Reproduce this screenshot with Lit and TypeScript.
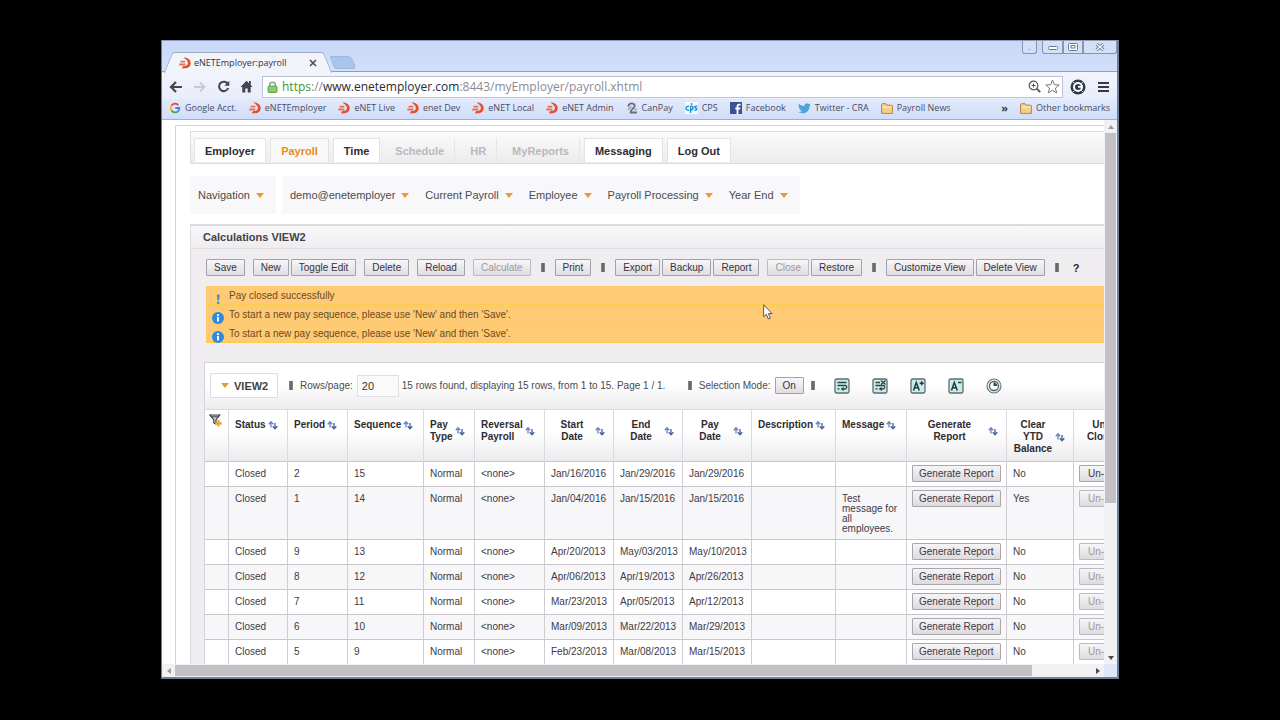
import { LitElement, html, svg, css, nothing } from "lit";
import { customElement, property } from "lit/decorators.js";
import { classMap } from "lit/directives/class-map.js";

type IconName =
  | "google" | "enet" | "canpay" | "cps" | "facebook" | "twitter" | "folder"
  | "back" | "forward" | "reload" | "home" | "lock" | "zoom" | "star" | "badge" | "menu"
  | "close" | "sort" | "filter" | "wrap" | "unwrap" | "fontUp" | "fontDown" | "clock"
  | "info" | "alert" | "winMin" | "winMax" | "winClose" | "cursor";

const box = svg`<rect x="1" y="1" width="14" height="14" rx="1.5" fill="#c9ece9" stroke="#5c6c72" stroke-width="1.3"/>`;

const ICONS: Record<IconName, { w: number; h: number; body: unknown }> = {
  google: { w: 12, h: 12, body: svg`<g fill="none" stroke-width="1.8"><path d="M9.4 3.2A4.300 4.300 0 0 0 2.500 3.600" stroke="#ea4335"/><path d="M2.500 3.600a4.300 4.300 0 0 0 0 4.800" stroke="#fbbc05"/><path d="M2.500 8.400a4.300 4.300 0 0 0 6.500.900" stroke="#34a853"/><path d="M6.300 6H10.300A4.300 4.300 0 0 1 9 9.300" stroke="#4285f4"/></g>` },
  enet: { w: 12, h: 12, body: svg`<path d="M4.500.6C9 .4 11.700 3 11.700 6.200 11.700 9.400 9 11.400 5.600 11.300L2.800 11.600 4.200 8.900C7 9.400 8.900 8.300 8.900 6 8.900 3.900 7.400 2.600 4.500.6Z" fill="#e2502c"/><path d="M1.500 4.600H6.300M.3 7.500H6.300" stroke="#ee7048" stroke-width="1.800"/>` },
  canpay: { w: 12, h: 12, body: svg`<path d="M2 4.500C3 2 5 1 6.500 1.500 9.500 2 9 4.500 7.500 6 6 7.500 4.500 8 4.500 10.500H11" fill="none" stroke="#6d6d74" stroke-width="1.800"/><path d="M2 7.500L5.500 4.500M8.500 8L11 7" stroke="#96969c" stroke-width="1.300"/>` },
  cps: { w: 13, h: 12, body: svg`<rect width="13" height="12" fill="#f8fcff"/><g fill="none" stroke="#1e93d6" stroke-width="1.500"><path d="M4 4.500a2 2 0 1 0 0 3.500M5.600 4V11M5.600 4.500c3-1 3.400 3.800 0 3.400M12.300 4.300c-3-.7-3.200 1.300-1.600 1.600s2 2.500-1.200 2.200"/></g><circle cx="6.500" cy="2" r="1" fill="#1e93d6"/>` },
  facebook: { w: 12, h: 12, body: svg`<rect width="12" height="12" fill="#3b5190"/><path d="M7.500 12V4.300Q7.500 2.600 9 2.600H10.700M5.300 6.500H10.300" fill="none" stroke="#fff" stroke-width="1.800"/>` },
  twitter: { w: 13, h: 12, body: svg`<path d="M.8 1.600C2.600 3.500 4.400 4.300 6.400 4.300 6.300 1.500 8.800.6 10.300 2L12.300 1.500 11.700 3 12.700 3.100 11.600 4.200C11.400 8.800 8 11.200 4.600 11.200 3 11.200 1.500 10.800.4 10 2 10 3.200 9.600 4 9 2.600 8.800 1.900 8 1.600 7.200H2.700C1.300 6.600.7 5.800.6 4.400L1.600 4.700C.5 3.900.2 2.700.8 1.600Z" fill="#4ba3e0"/>` },
  folder: { w: 12, h: 11, body: svg`<path d="M.6 10.400V1.600Q.6.700 1.500.7H5L6 2.200H10.500Q11.400 2.200 11.400 3V10.400Z" fill="#f6cf86" stroke="#b58342"/><path d="M1.200 4H10.800" stroke="#fff0c8"/>` },
  back: { w: 14, h: 12, body: svg`<path d="M13 6H2.500M7 1L2 6L7 11" fill="none" stroke="#47454c" stroke-width="2.200"/>` },
  forward: { w: 14, h: 12, body: svg`<path d="M1 6H11.500M7 1.500L11.500 6L7 10.500" fill="none" stroke="#c9cad2" stroke-width="1.900"/>` },
  reload: { w: 13, h: 13, body: svg`<path d="M10.800 4A4.700 4.700 0 1 0 11.200 8" fill="none" stroke="#47454c" stroke-width="2.100"/><path d="M12.300.8V5.800H7.300Z" fill="#47454c"/>` },
  home: { w: 13, h: 13, body: svg`<path d="M6.500.8L.5 7H2.300V12.500H5.300V8.500H7.700V12.500H10.700V7H12.500L10.800 5.200V1H9V3.300Z" fill="#47454c"/>` },
  lock: { w: 11, h: 12, body: svg`<path d="M2.700 6V3.600Q2.700 1.200 5.500 1.200T8.300 3.600V6" fill="none" stroke="#8fa88c" stroke-width="1.600"/><rect x="1" y="5" width="9" height="6.500" rx="1" fill="#7cc45a" stroke="#58a044" stroke-width=".8"/><path d="M2 7H9M2 9H9" stroke="#a8dc8c" stroke-width=".8"/>` },
  zoom: { w: 13, h: 13, body: svg`<circle cx="5.500" cy="5.500" r="4.300" fill="none" stroke="#55545a" stroke-width="1.200"/><path d="M3.500 5.500H7.500M5.500 3.500V7.500" stroke="#55545a"/><path d="M8.700 8.700L12.200 12.200" stroke="#55545a" stroke-width="1.900"/>` },
  star: { w: 15, h: 15, body: svg`<path d="M7.500 1L9.300 5.700 14.200 6 10.400 9.100 11.700 13.900 7.500 11.200 3.300 13.900 4.600 9.100.8 6 5.700 5.700Z" fill="#fff" stroke="#6a6a72" stroke-width=".9"/>` },
  badge: { w: 16, h: 16, body: svg`<circle cx="8" cy="8" r="7.500" fill="#323846"/><circle cx="8" cy="8" r="4" fill="none" stroke="#fff" stroke-width="2"/><path d="M8 7.800H12.200" stroke="#fff" stroke-width="1.800"/><path d="M3 3L4.500 4.500M13 3L11.500 4.500M3 13L4.500 11.500M13 13L11.500 11.500" stroke="#d4d8e4"/>` },
  menu: { w: 11, h: 12, body: svg`<path d="M0 2H11M0 6H11M0 10H11" stroke="#3a3844" stroke-width="2"/>` },
  close: { w: 8, h: 8, body: svg`<path d="M1 1L7 7M7 1L1 7" stroke="#4a4a50" stroke-width="1.500"/>` },
  sort: { w: 10, h: 10, body: svg`<path d="M3 7.500V2M.8 4.200L3 1.700 5.200 4.200" fill="none" stroke="#6a82bc" stroke-width="1.300"/><path d="M7 3V8.500M4.800 6.300L7 8.700 9.300 6.300" fill="none" stroke="#46609f" stroke-width="1.300"/>` },
  filter: { w: 13, h: 13, body: svg`<path d="M.8 1H10.800L7 5.600V10L4.800 8.800V5.600Z" fill="#d8d8dc" stroke="#3a3a3e" stroke-width="1.100"/><path d="M2 2.800H9.600" stroke="#3a3a3e"/><path d="M9.500 6V12.600M6.200 9.300H12.800" stroke="#f0a22c" stroke-width="2.200"/>` },
  wrap: { w: 16, h: 16, body: svg`${box}<path d="M3.500 4.500H12.500M3.500 7.500H11.500Q13 7.800 12.700 9.500T10.500 11H8M3.500 10.800H5.500" fill="none" stroke="#2c4248" stroke-width="1.300"/><path d="M9.600 8.800V13L6.700 10.900Z" fill="#2c4248"/>` },
  unwrap: { w: 16, h: 16, body: svg`${box}<path d="M3.500 4.500H8M3.500 7.500H11.500Q13 7.800 12.700 9.500T10.500 11H8M3.500 10.800H5.500" fill="none" stroke="#2c4248" stroke-width="1.300"/><path d="M9.600 8.800V13L6.700 10.900Z" fill="#2c4248"/><path d="M9 2.500L13.500 6.500M13.500 2.500L9 6.500" stroke="#2c4248" stroke-width="1.300"/>` },
  fontUp: { w: 16, h: 16, body: svg`${box}<path d="M3.500 12.500L6.300 4.500 9.300 12.500M4.500 9.800H8.300M9.700 5.200H13.700M11.700 3.200V7.200" fill="none" stroke="#24383e" stroke-width="1.500"/>` },
  fontDown: { w: 16, h: 16, body: svg`${box}<path d="M3.500 12.500L6.300 4.500 9.300 12.500M4.500 9.800H8.300M10 4.500H13.500" fill="none" stroke="#24383e" stroke-width="1.500"/>` },
  clock: { w: 16, h: 16, body: svg`<circle cx="8" cy="8" r="7" fill="#e6f2f1" stroke="#66747c" stroke-width="1.100"/><circle cx="8" cy="8" r="4.500" fill="#fff" stroke="#50606a" stroke-width="1.300"/><path d="M7.500 8V4.500A4 4 0 0 1 11.300 8Z" fill="#34464e"/>` },
  info: { w: 12, h: 12, body: svg`<circle cx="6" cy="6" r="6" fill="#2e8ae0"/><circle cx="6" cy="3.200" r="1.100" fill="#fff"/><path d="M6 5V9.600" stroke="#fff" stroke-width="1.900"/>` },
  alert: { w: 12, h: 12, body: svg`<path d="M4.800 1.500H7.700L7 7.400H5.500Z" fill="#4a8cc4"/><circle cx="6.200" cy="9.700" r="1.300" fill="#4a8cc4"/>` },
  winMin: { w: 10, h: 8, body: svg`<rect x=".5" y="3.500" width="9" height="3" rx="1" fill="#fff" stroke="#6a7690"/>` },
  winMax: { w: 10, h: 8, body: svg`<rect x=".5" y=".5" width="9" height="7" rx="1" fill="#fff" stroke="#6a7690"/><rect x="3" y="2.500" width="4" height="2.500" fill="none" stroke="#6a7690"/>` },
  winClose: { w: 10, h: 8, body: svg`<path d="M1.500 1L8.500 7M8.500 1L1.500 7" stroke="#6a7690" stroke-width="3"/><path d="M1.500 1L8.500 7M8.500 1L1.500 7" stroke="#fff" stroke-width="1.200"/>` },
  cursor: { w: 10, h: 16, body: svg`<path d="M.7.800V12.800L3.400 10.300 5.400 15 7.400 14.100 5.400 9.600H9Z" fill="#fff" stroke="#4a4450" stroke-width=".9"/>` },
};

const icon = (name: IconName) => {
  const i = ICONS[name];
  return html`<svg class="icon" width=${i.w} height=${i.h} viewBox="0 0 ${i.w} ${i.h}" aria-hidden="true">${i.body}</svg>`;
};

const shared = css`
  * { box-sizing: border-box; }
  button { font: inherit; color: inherit; margin: 0; padding: 0; border: 0; background: none; white-space: nowrap; }
  a { color: inherit; text-decoration: none; }
  .icon { display: block; flex: none; }
`;

const BOOKMARKS: [IconName, string][] = [
  ["google", "Google Acct."], ["enet", "eNETEmployer"], ["enet", "eNET Live"], ["enet", "enet Dev"],
  ["enet", "eNET Local"], ["enet", "eNET Admin"], ["canpay", "CanPay"], ["cps", "CPS"],
  ["facebook", "Facebook"], ["twitter", "Twitter - CRA"], ["folder", "Payroll News"],
];

@customElement("browser-chrome")
export class BrowserChrome extends LitElement {
  static styles = [shared, css`
    :host { display: block; font: 9px/12px "Open Sans", "Noto Sans", sans-serif; color: #3c3c46; }
    .strip { display: flex; height: 31px; background: linear-gradient(#c8d8f8, #d2dffa); border-top: 1px solid #8d9ab2; isolation: isolate; }
    .tab { display: flex; align-items: center; align-self: flex-end; width: 148px; height: 20px; margin: 0 0 -1px 12px; padding: 0 5px; background: #f2f4fc; border-top: 1px solid #9aa6c0; position: relative; }
    .tab::before, .tab::after { content: ""; position: absolute; top: -1px; width: 12px; height: 20px; background: #f2f4fc; z-index: -1; }
    .tab::before { left: -6px; transform: skewX(-22deg); border-left: 1px solid #9aa6c0; border-top: 1px solid #9aa6c0; border-top-left-radius: 3px; }
    .tab::after { right: -6px; transform: skewX(22deg); border-right: 1px solid #9aa6c0; border-top: 1px solid #9aa6c0; border-top-right-radius: 3px; }
    .title { flex: 1; margin-left: 3px; color: #33323a; }
    .newtab { width: 22px; height: 13px; margin: 15px 0 0 10px; background: #a9c5ee; border: 1px solid #9db8e0; border-radius: 2px 4px 4px 2px; transform: skewX(22deg); }
    .controls { display: flex; margin-left: auto; align-self: flex-start; color: #6a7690; }
    .controls button { display: grid; place-items: center; height: 13px; border: 1px solid #8894b0; border-top: 0; background: #d4e0f8; }
    .help { width: 15px; margin-right: 5px; border-radius: 0 0 3px 3px; }
    .min { width: 21px; border-radius: 0 0 0 3px; }
    .max { width: 20px; }
    .x { width: 34px; border-radius: 0 0 3px 0; }
    .bar { display: flex; align-items: center; height: 28px; padding: 2px 6px 0 7px; gap: 10px; background: linear-gradient(#f2f4fc, #e8edfb); border-top: 1px solid #8f9ebc; }
    .address { flex: 1; display: flex; align-items: center; height: 22px; padding: 0 2px 0 4px; margin-left: -1px; background: #fff; border: 1px solid #bcc4d6; gap: 4px; }
    .url { flex: 1; font-size: 12px; line-height: 16px; color: #8c8b94; outline: none; white-space: nowrap; overflow: hidden; }
    .secure { color: #3c9a2c; }
    .domain { color: #2c2a34; }
    .tail { display: flex; align-items: center; gap: 12px; margin: 0 2px 0 -3px; }
    .marks { display: flex; align-items: center; height: 21px; padding: 0 7px 2px; gap: 12px; background: linear-gradient(#e2eafb, #d0dcf9); border-bottom: 1px solid #a4aec8; }
    .mark { display: flex; align-items: center; gap: 4px; white-space: nowrap; color: #4a4d60; }
    .more { margin-left: auto; font-weight: 700; font-size: 11px; }
  `];

  render() {
    return html`
      <div class="strip">
        <div class="tab">${icon("enet")}<span class="title">eNETEmployer:payroll</span><button aria-label="Close tab">${icon("close")}</button></div>
        <button class="newtab" aria-label="New tab"></button>
        <div class="controls">
          <button class="help" aria-label="Help">.</button>
          <button class="min" aria-label="Minimize">${icon("winMin")}</button>
          <button class="max" aria-label="Maximize">${icon("winMax")}</button>
          <button class="x" aria-label="Close">${icon("winClose")}</button>
        </div>
      </div>
      <div class="bar">
        <button aria-label="Back">${icon("back")}</button>
        <button aria-label="Forward">${icon("forward")}</button>
        <button aria-label="Reload">${icon("reload")}</button>
        <button aria-label="Home">${icon("home")}</button>
        <div class="address">
          ${icon("lock")}
          <div class="url" role="textbox" aria-label="Address" contenteditable="true" spellcheck="false"><span class="secure">https</span>://<span class="domain">www.enetemployer.com</span>:8443/myEmployer/payroll.xhtml</div>
          <button aria-label="Zoom">${icon("zoom")}</button>
          <button aria-label="Bookmark">${icon("star")}</button>
        </div>
        <div class="tail">
          <button aria-label="Extension">${icon("badge")}</button>
          <button aria-label="Menu">${icon("menu")}</button>
        </div>
      </div>
      <nav class="marks" aria-label="Bookmarks">
        ${BOOKMARKS.map(([i, t]) => html`<a class="mark" href="#">${icon(i)}${t}</a>`)}
        <button class="more">»</button>
        <a class="mark" href="#">${icon("folder")}Other bookmarks</a>
      </nav>
    `;
  }
}

interface PayRow {
  period: string; seq: string; start: string; end: string; pay: string;
  message?: string; clear: string; open?: boolean;
}

const ROWS: PayRow[] = [
  { period: "2", seq: "15", start: "Jan/16/2016", end: "Jan/29/2016", pay: "Jan/29/2016", clear: "No", open: true },
  { period: "1", seq: "14", start: "Jan/04/2016", end: "Jan/15/2016", pay: "Jan/15/2016", message: "Test message for all employees.", clear: "Yes" },
  { period: "9", seq: "13", start: "Apr/20/2013", end: "May/03/2013", pay: "May/10/2013", clear: "No" },
  { period: "8", seq: "12", start: "Apr/06/2013", end: "Apr/19/2013", pay: "Apr/26/2013", clear: "No" },
  { period: "7", seq: "11", start: "Mar/23/2013", end: "Apr/05/2013", pay: "Apr/12/2013", clear: "No" },
  { period: "6", seq: "10", start: "Mar/09/2013", end: "Mar/22/2013", pay: "Mar/29/2013", clear: "No" },
  { period: "5", seq: "9", start: "Feb/23/2013", end: "Mar/08/2013", pay: "Mar/15/2013", clear: "No" },
];

/* label lines, column width, centred label */
const COLUMNS: [string[], number, boolean][] = [
  [["Status"], 59, false], [["Period"], 60, false], [["Sequence"], 76, false],
  [["Pay", "Type"], 51, false], [["Reversal", "Payroll"], 70, false],
  [["Start", "Date"], 69, true], [["End", "Date"], 69, true], [["Pay", "Date"], 69, true],
  [["Description"], 84, false], [["Message"], 71, false], [["Generate", "Report"], 100, true],
  [["Clear", "YTD", "Balance"], 67, true], [["Un-", "Close"], 68, true],
];

@customElement("payroll-table")
export class PayrollTable extends LitElement {
  @property({ attribute: false }) rows: PayRow[] = ROWS;

  static styles = [shared, css`
    :host { display: block; width: max-content; min-width: 100%; }
    table { table-layout: fixed; width: 937px; border-collapse: separate; border-spacing: 0; font-size: 10px; line-height: 10px; color: #3e3a44; }
    .c-filter { width: 24px; }
    th, td { padding: 7px 5px 0 6px; text-align: left; vertical-align: top; border-right: 1px solid #cfccd2; border-bottom: 1px solid #c8c5cb; }
    th { height: 52px; padding: 9px 8px 0 6px; line-height: 12px; color: #2e2c32; background: linear-gradient(#fff 40%, #ecebee); border-right-color: #dcdadf; }
    th.corner { padding: 4px 0 0 4px; }
    .head { display: flex; align-items: center; gap: 2px; }
    .mid .label { flex: 1; text-align: center; }
    .line { display: block; }
    tr { height: 25px; }
    tr.tall { height: 53px; }
    tr:nth-child(even) td { background: #f7f6f9; }
    td.act { padding: 3px 5px 0 5px; }
    .btn { height: 17px; padding: 0 6px; border: 1px solid #a9a7ac; border-radius: 1px; background: linear-gradient(#f6f5f7, #dddbdf); line-height: 15px; }
    .btn.undo { padding: 0 8px; }
    .btn:disabled { color: #9c9aa0; border-color: #bdbbc0; }
  `];

  render() {
    return html`
      <table>
        <colgroup>
          <col class="c-filter" />
          ${COLUMNS.map(([, w]) => html`<col style="width:${w}px" />`)}
        </colgroup>
        <thead>
          <tr>
            <th class="corner"><button aria-label="Filter">${icon("filter")}</button></th>
            ${COLUMNS.map(([lines, , mid]) => html`<th><div class=${classMap({ head: true, mid })}><span class="label">${lines.map((l) => html`<span class="line">${l}</span>`)}</span><button aria-label="Sort">${icon("sort")}</button></div></th>`)}
          </tr>
        </thead>
        <tbody>
          ${this.rows.map((r) => html`<tr class=${classMap({ tall: !!r.message })}>
            <td></td><td>Closed</td><td>${r.period}</td><td>${r.seq}</td><td>Normal</td><td>&lt;none&gt;</td>
            <td>${r.start}</td><td>${r.end}</td><td>${r.pay}</td><td></td><td>${r.message ?? nothing}</td>
            <td class="act"><button class="btn">Generate Report</button></td>
            <td>${r.clear}</td>
            <td class="act"><button class="btn undo" ?disabled=${!r.open}>Un-Close</button></td>
          </tr>`)}
        </tbody>
      </table>
    `;
  }
}

const MODULES: [string, string][] = [
  ["Employer", "on"], ["Payroll", "current"], ["Time", "on"], ["Schedule", "off"],
  ["HR", "off"], ["MyReports", "off"], ["Messaging", "on"], ["Log Out", "on"],
];

/* "|" draws a divider; "~" marks an unavailable action */
const ACTIONS: string[][] = [
  ["Save"], ["New", "Toggle Edit"], ["Delete"], ["Reload"], ["~Calculate"], ["|"], ["Print"], ["|"],
  ["Export", "Backup", "Report"], ["~Close", "Restore"], ["|"], ["Customize View", "Delete View"], ["|"],
];

@customElement("payroll-page")
export class PayrollPage extends LitElement {
  static styles = [shared, css`
    :host { display: block; overflow: hidden; background: #fff; font: 11px/14px "Liberation Sans", Arial, sans-serif; color: #4c4a50; }
    .sheet { margin: 5px 0 0 13px; padding: 5px 0 0 14px; border: solid #d4d4da; border-width: 1px 0 0 1px; }
    .modules { display: flex; gap: 4px; height: 33px; padding: 6px 3px 1px; border: 1px solid #dddce0; border-right: 0; background: linear-gradient(#fbfafb, #ecebed); font-weight: 700; }
    .modules button { padding: 0 10px; border: 1px solid #e4e2e6; border-bottom: 0; font-weight: 700; }
    .modules .on { background: #fff; color: #2e2c30; }
    .modules .current { color: #ec8a22; background: #f9f8f9; }
    .modules .off { color: #bab8bd; border-color: transparent #e6e4e8 transparent transparent; }
    .menus { display: flex; gap: 6px; margin-top: 12px; }
    .menu { display: flex; gap: 16px; height: 38px; padding: 0 12px 0 8px; background: #f8f7f9; }
    .menu button { display: flex; align-items: center; gap: 6px; }
    .caret { border: 4px solid transparent; border-top: 5px solid #ec9a34; border-bottom: 0; }
    .panel { margin-top: 10px; background: #efedef; border: 1px solid #dcdadd; border-width: 2px 0 0 1px; }
    h1 { margin: 0; padding: 5px 12px; height: 23px; font-size: 11px; line-height: 12px; color: #444248; background: linear-gradient(#f9f8f9, #eeecef); border-bottom: 1px solid #e0dee2; }
    .actions { display: flex; align-items: center; gap: 8px; height: 37px; padding: 0 15px; font-size: 10px; white-space: nowrap; }
    .group { display: flex; gap: 2px; }
    .btn { height: 17px; padding: 0 7px; border: 1px solid #a4a2a8; border-radius: 1px; background: linear-gradient(#f7f6f8, #dfdde1); color: #37343c; line-height: 15px; font-size: 10px; }
    .btn:disabled { color: #9c9aa0; border-color: #bdbbc0; }
    .rule { width: 4px; height: 9px; background: linear-gradient(90deg, #909090, #5c5c5e 50%, #909090); }
    .actions .rule { margin: 0 2px; }
    .ask { margin-left: 4px; font-size: 11px; font-weight: 700; color: #2c2a2e; }
    .notes { list-style: none; margin: 0 0 19px 15px; padding: 0; font-size: 10px; line-height: 14px; color: #6a4a1e; background: #fecb74; }
    .note { display: flex; gap: 5px; height: 19px; padding: 3px 6px 0; border-bottom: 1px solid #fccd4c; }
    .note .icon { margin-top: 4px; }
    .grid { margin-left: 13px; border: solid #d6d4d8; border-width: 1px 0 0 1px; background: #fff; }
    .tools { display: flex; align-items: center; gap: 7px; height: 47px; padding: 0 0 1px 5px; background: linear-gradient(#fff 45%, #ecebee); border-bottom: 1px solid #dcdadf; font-size: 10px; white-space: nowrap; }
    .view { display: flex; align-items: center; gap: 5px; height: 25px; width: 68px; padding-left: 10px; margin-right: 4px; border: 1px solid #e0dee2; background: #fff; font-size: 11px; font-weight: 700; color: #444; }
    .field { display: flex; align-items: center; gap: 4px; }
    .field input { width: 42px; height: 22px; padding: 0 4px; border: 1px solid #e0dee2; background: #fbfafb; font: 11px/14px "Liberation Sans", Arial, sans-serif; color: #333; }
    .count { width: 279px; margin-left: -4px; }
    .tray { display: flex; gap: 22px; margin-left: 12px; }
  `];

  render() {
    const menu = (t: string) => html`<button>${t}<span class="caret"></span></button>`;
    return html`
      <div class="sheet">
        <nav class="modules">
          ${MODULES.map(([t, c]) => html`<button class=${c} ?disabled=${c === "off"}>${t}</button>`)}
        </nav>
        <div class="menus">
          <div class="menu">${menu("Navigation")}</div>
          <div class="menu">${["demo@enetemployer", "Current Payroll", "Employee", "Payroll Processing", "Year End"].map(menu)}</div>
        </div>
        <section class="panel">
          <h1>Calculations VIEW2</h1>
          <div class="actions">
            ${ACTIONS.map((g) => g[0] === "|"
              ? html`<span class="rule"></span>`
              : html`<span class="group">${g.map((a) => html`<button class="btn" ?disabled=${a.startsWith("~")}>${a.replace("~", "")}</button>`)}</span>`)}
            <button class="ask">?</button>
          </div>
          <ul class="notes">
            <li class="note">${icon("alert")}Pay closed successfully</li>
            <li class="note">${icon("info")}To start a new pay sequence, please use 'New' and then 'Save'.</li>
            <li class="note">${icon("info")}To start a new pay sequence, please use 'New' and then 'Save'.</li>
          </ul>
          <div class="grid">
            <div class="tools">
              <button class="view"><span class="caret"></span>VIEW2</button>
              <span class="rule"></span>
              <span class="field"><label for="rows">Rows/page:</label><input id="rows" type="text" .value=${"20"} /></span>
              <span class="count">15 rows found, displaying 15 rows, from 1 to 15. Page 1 / 1.</span>
              <span class="rule"></span>
              <span class="field">Selection Mode:<button class="btn">On</button></span>
              <span class="rule"></span>
              <span class="tray">
                <button aria-label="Wrap text">${icon("wrap")}</button>
                <button aria-label="Do not wrap">${icon("unwrap")}</button>
                <button aria-label="Larger text">${icon("fontUp")}</button>
                <button aria-label="Smaller text">${icon("fontDown")}</button>
                <button aria-label="Reset">${icon("clock")}</button>
              </span>
            </div>
            <payroll-table></payroll-table>
          </div>
        </section>
      </div>
    `;
  }
}

@customElement("app-root")
export class AppRoot extends LitElement {
  static styles = [shared, css`
    :host { display: block; height: 100vh; box-sizing: border-box; padding: 40px 161px 41px; background: #000; position: relative; overflow: hidden; }
    .window { display: grid; grid-template-rows: auto minmax(0, 1fr); height: 100%; border: solid #6e7f98; border-width: 0 2px 2px 1px; background: #dfe7f8; }
    .view { display: grid; grid-template: minmax(0, 1fr) 13px / minmax(0, 1fr) 13px; }
    .vbar, .hbar { display: flex; background: #f1f0f3; }
    .vbar { flex-direction: column; align-items: stretch; }
    .vthumb { height: 68%; background: #c2c0c4; margin: 0 1px; }
    .hthumb { width: 91%; margin: 1px 0; background: #c2c0c4; }
    .arrow { flex: none; display: grid; place-items: center; width: 13px; height: 13px; }
    .end { margin-left: auto; }
    .bottom { margin-top: auto; }
    .tri { border: 3px solid transparent; }
    .up { border-bottom: 4px solid #9a989e; border-top: 0; }
    .down { border-top: 4px solid #4a484e; border-bottom: 0; }
    .left { border-right: 4px solid #9a989e; border-left: 0; }
    .right { border-left: 4px solid #4a484e; border-right: 0; }
    .pointer { position: absolute; left: 763px; top: 304px; }
  `];

  render() {
    return html`
      <div class="window">
        <browser-chrome></browser-chrome>
        <div class="view">
          <payroll-page></payroll-page>
          <div class="vbar">
            <span class="arrow"><span class="tri up"></span></span>
            <span class="vthumb"></span>
            <span class="arrow bottom"><span class="tri down"></span></span>
          </div>
          <div class="hbar">
            <span class="arrow"><span class="tri left"></span></span>
            <span class="hthumb"></span>
            <span class="arrow end"><span class="tri right"></span></span>
          </div>
        </div>
      </div>
      <div class="pointer">${icon("cursor")}</div>
    `;
  }
}
